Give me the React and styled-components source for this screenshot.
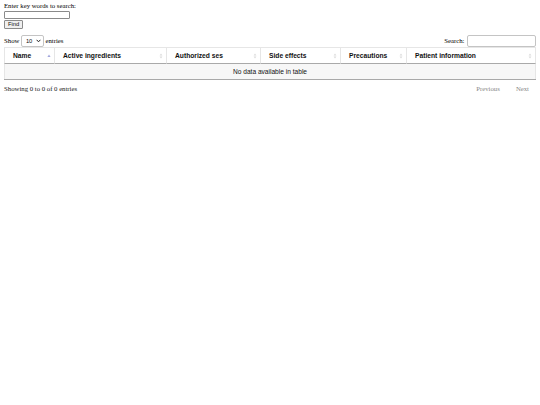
import React from "react";
import styled, { createGlobalStyle } from "styled-components";

const GlobalStyle = createGlobalStyle`
  html, body {
    margin: 0;
    padding: 0;
    background: #fff;
  }
`;

const Page = styled.div`
  padding: 2px 4px;
  font-family: "Liberation Serif", "Times New Roman", serif;
  font-size: 6.75px;
  line-height: 8.3px;
  color: #000;
`;

const SearchForm = styled.form`
  display: flex;
  flex-direction: column;
  align-items: flex-start;
  margin: 0;
`;

const KeywordInput = styled.input`
  box-sizing: border-box;
  width: 66px;
  height: 8px;
  margin: 1px 0 0;
  padding: 0 1px;
  font-size: 6px;
  border: 1px solid #8a8a8a;
  border-radius: 1px;
`;

const FindButton = styled.button`
  box-sizing: border-box;
  height: 9px;
  margin-top: 1px;
  padding: 0 3px;
  font-family: "Liberation Sans", Arial, sans-serif;
  font-size: 5.8px;
  line-height: 7px;
  color: #111;
  background: #efefef;
  border: 1px solid #8a8a8a;
  border-radius: 1px;
`;

const TopBar = styled.div`
  display: flex;
  justify-content: space-between;
  align-items: center;
  height: 13px;
  margin-top: 5px;
`;

const Label = styled.label`
  display: flex;
  align-items: center;
  gap: 1.5px;
`;

const SelectWrap = styled.span`
  position: relative;
  display: inline-flex;
`;

const LengthSelect = styled.select`
  appearance: none;
  box-sizing: border-box;
  width: 23px;
  height: 12px;
  padding: 0 0 0 4px;
  font-family: "Liberation Sans", Arial, sans-serif;
  font-size: 5.8px;
  color: #111;
  background: transparent;
  border: 1px solid #c4c4c4;
  border-radius: 2px;
`;

const Chevron = styled.svg`
  position: absolute;
  right: 3px;
  top: 4px;
  pointer-events: none;
`;

const FilterInput = styled.input`
  box-sizing: border-box;
  width: 69px;
  height: 12px;
  margin-left: 1px;
  border: 1px solid #c4c4c4;
  border-radius: 2px;
  background: transparent;
`;

const Table = styled.table`
  width: 100%;
  table-layout: fixed;
  border-collapse: separate;
  border-spacing: 0;
  font-family: "Liberation Sans", Arial, sans-serif;
  color: #111;
  border-top: 1px solid #e6e6e6;
  border-bottom: 1px solid #a9a9a9;
`;

const Th = styled.th`
  box-sizing: border-box;
  width: ${(p) => p.$w}px;
  height: 16px;
  padding: 0 3px 0 8px;
  font-size: 6.7px;
  font-weight: bold;
  text-align: left;
  border-bottom: 1px solid #a9a9a9;
  border-left: 1px solid #e6e6e6;
  &:last-child {
    border-right: 1px solid #e6e6e6;
  }
`;

const ThInner = styled.div`
  display: flex;
  align-items: center;
  justify-content: space-between;
  white-space: nowrap;
`;

const EmptyCell = styled.td`
  height: 15px;
  padding: 0;
  font-size: 6.6px;
  text-align: center;
  background: #f7f7f7;
  border-left: 1px solid #e6e6e6;
  border-right: 1px solid #e6e6e6;
`;

const BottomBar = styled.div`
  display: flex;
  justify-content: space-between;
  align-items: center;
  padding-top: 5px;
`;

const Info = styled.div`
  color: #222;
`;

const Paginate = styled.div`
  display: flex;
`;

const PageButton = styled.a`
  padding: 0 7px;
  margin-left: 2px;
  color: #888;
  cursor: default;
`;

const SortIcon = ({ dir }) =>
  dir === "asc" ? (
    <svg width="4" height="6" viewBox="0 0 4 6">
      <path d="M2 1.5 L3.6 4 L0.4 4 Z" fill="#a3a7dc" />
    </svg>
  ) : (
    <svg width="4" height="6" viewBox="0 0 4 6">
      <path d="M2 0.4 L3.4 2.5 L0.6 2.5 Z" fill="#dcdcdc" />
      <path d="M2 5.6 L3.4 3.5 L0.6 3.5 Z" fill="#dcdcdc" />
    </svg>
  );

const columns = [
  { title: "Name", width: 50 },
  { title: "Active ingredients", width: 112 },
  { title: "Authorized ses", width: 94 },
  { title: "Side effects", width: 80 },
  { title: "Precautions", width: 66 },
  { title: "Patient information", width: 130 },
];

const App = () => (
  <>
    <GlobalStyle />
    <Page>
      <SearchForm onSubmit={(e) => e.preventDefault()}>
        Enter key words to search:
        <KeywordInput type="text" />
        <FindButton type="submit">Find</FindButton>
      </SearchForm>

      <TopBar>
        <Label>
          Show
          <SelectWrap>
            <LengthSelect defaultValue="10">
              <option value="10">10</option>
              <option value="25">25</option>
              <option value="50">50</option>
              <option value="100">100</option>
            </LengthSelect>
            <Chevron width="5" height="4" viewBox="0 0 5 4">
              <path d="M0.6 0.8 L2.5 2.8 L4.4 0.8" fill="none" stroke="#222" strokeWidth="1" />
            </Chevron>
          </SelectWrap>
          entries
        </Label>
        <Label>
          Search:
          <FilterInput type="search" />
        </Label>
      </TopBar>

      <Table>
        <thead>
          <tr>
            {columns.map((col, i) => (
              <Th key={col.title} $w={col.width}>
                <ThInner>
                  {col.title}
                  <SortIcon dir={i === 0 ? "asc" : "both"} />
                </ThInner>
              </Th>
            ))}
          </tr>
        </thead>
        <tbody>
          <tr>
            <EmptyCell colSpan={6}>No data available in table</EmptyCell>
          </tr>
        </tbody>
      </Table>

      <BottomBar>
        <Info>Showing 0 to 0 of 0 entries</Info>
        <Paginate>
          <PageButton>Previous</PageButton>
          <PageButton>Next</PageButton>
        </Paginate>
      </BottomBar>
    </Page>
  </>
);

export default App;
